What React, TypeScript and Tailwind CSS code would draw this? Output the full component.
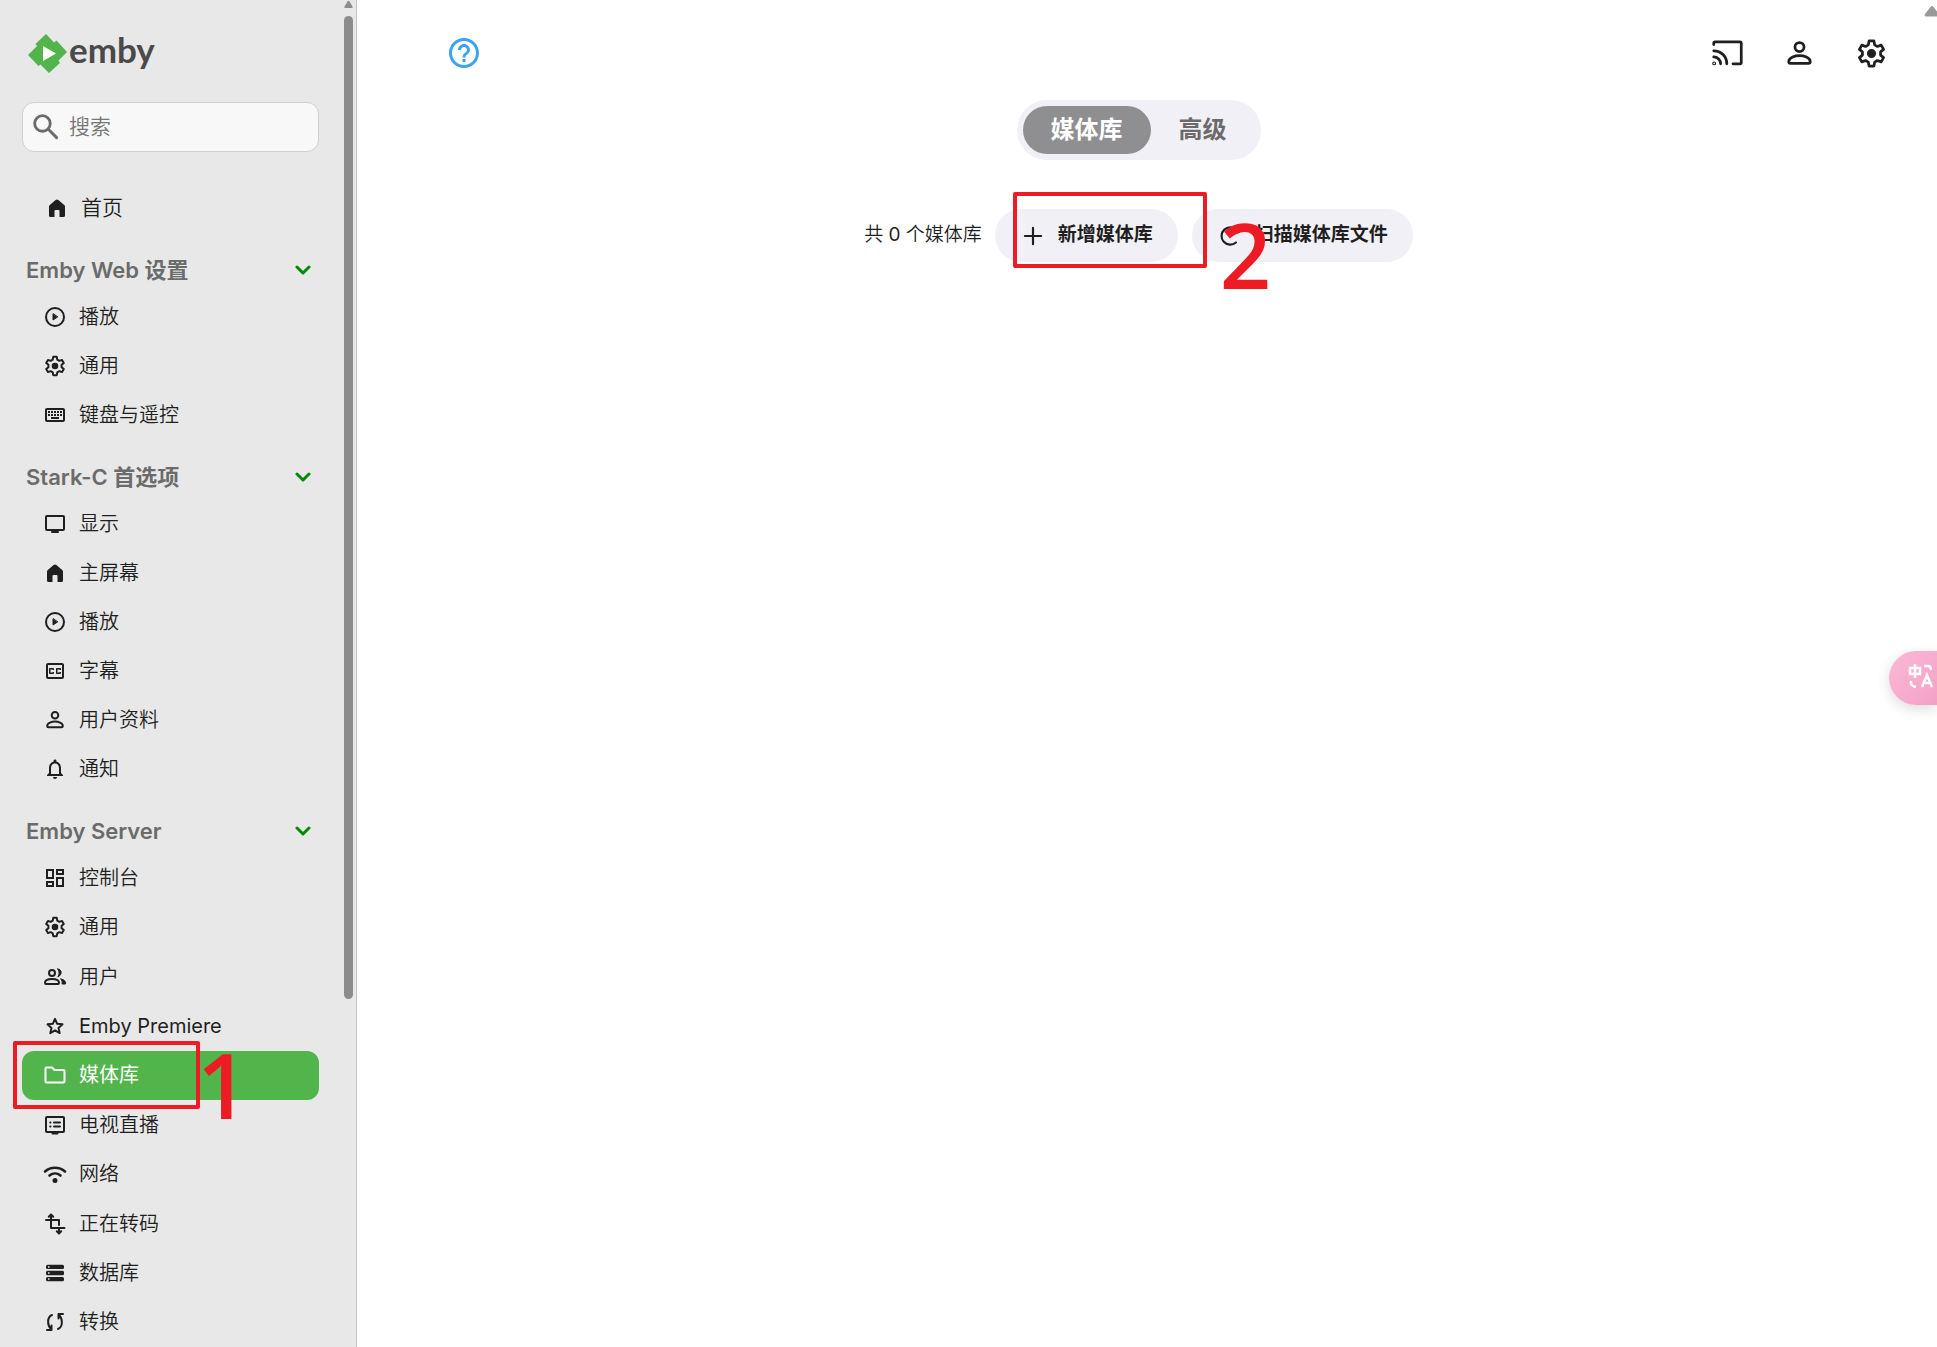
import type { ReactNode } from 'react';
import {
    MdOutlineKeyboard, MdOutlineClosedCaption, MdOutlineNotifications, MdOutlineDashboard, MdOutlineHelpOutline,
} from 'react-icons/md';

interface NavItem {
    label: string;
    icon: ReactNode;
    active?: boolean;
    latin?: boolean;
}

interface NavGroup {
    title: string;
    items: NavItem[];
    fill?: boolean;
}

const groups: NavGroup[] = [
    {
        title: 'Emby Web 设置',
        items: [
            { label: '播放', icon: <PlayIcon /> },
            { label: '通用', icon: <GearIcon size={24} /> },
            { label: '键盘与遥控', icon: <MdOutlineKeyboard size={24} /> },
        ],
    },
    {
        title: 'Stark-C 首选项',
        items: [
            { label: '显示', icon: <ScreenIcon /> },
            { label: '主屏幕', icon: <HomeIcon /> },
            { label: '播放', icon: <PlayIcon /> },
            { label: '字幕', icon: <MdOutlineClosedCaption size={24} /> },
            { label: '用户资料', icon: <PersonIcon size={24} /> },
            { label: '通知', icon: <MdOutlineNotifications size={24} /> },
        ],
    },
    {
        title: 'Emby Server',
        fill: true,
        items: [
            { label: '控制台', icon: <MdOutlineDashboard size={24} /> },
            { label: '通用', icon: <GearIcon size={24} /> },
            { label: '用户', icon: <UsersIcon /> },
            { label: 'Emby Premiere', icon: <StarIcon />, latin: true },
            { label: '媒体库', icon: <FolderIcon />, active: true },
            { label: '电视直播', icon: <LiveTvIcon /> },
            { label: '网络', icon: <WifiIcon /> },
            { label: '正在转码', icon: <TranscodeIcon /> },
            { label: '数据库', icon: <DatabaseIcon /> },
            { label: '转换', icon: <ConvertIcon /> },
        ],
    },
];

// outline of the six-toothed gear, drawn tooth by tooth
const gearPath = [0, 60, 120, 180, 240, 300]
    .flatMap(a => [[6.7, a - 20], [9.3, a - 11], [9.3, a + 11], [6.7, a + 20]])
    .map(([r, a], i) => {
        const rad = (a * Math.PI) / 180;
        return `${i ? 'L' : 'M'}${(12 + r * Math.sin(rad)).toFixed(2)} ${(12 - r * Math.cos(rad)).toFixed(2)}`;
    })
    .join('') + 'Z';

export default function App() {
    return (
        <div className="flex h-screen overflow-hidden bg-white font-['Inter','Noto_Sans_CJK_SC',sans-serif] text-[#1f1f1f]">
            <Sidebar />
            <main className="relative flex-1 pr-[17px]">
                <header className="flex h-[106px] items-center justify-between pl-[89px] pr-8">
                    <button aria-label="帮助" className="text-[#3ea2f5]">
                        <MdOutlineHelpOutline size={36} />
                    </button>
                    <div className="flex items-center gap-[39px]">
                        <button aria-label="投放"><CastIcon /></button>
                        <button aria-label="用户"><PersonIcon size={33} /></button>
                        <button aria-label="设置"><GearIcon size={33} /></button>
                    </div>
                </header>

                <nav className="-mt-1.5 flex justify-center">
                    <div className="flex rounded-full bg-[#f1f0f6] p-1.5 text-2xl font-bold">
                        <a href="#library" className="flex h-12 items-center rounded-full bg-[#8f8f91] px-7 text-white">媒体库</a>
                        <a href="#advanced" className="flex h-12 items-center px-7 text-[#6b6b6b]">高级</a>
                    </div>
                </nav>

                <div className="mt-[49px] flex items-center justify-center text-[19px]">
                    <span className="mr-[13px] font-[350]">共 <span className="font-normal">0</span> 个媒体库</span>
                    <div className="relative mr-3.5">
                        <PillButton icon={<PlusIcon />} label="新增媒体库" />
                        <div className="pointer-events-none absolute -top-[17px] left-[18px] z-10 h-19 w-[194px] rounded-xs border-4 border-[#ed1c24]" />
                    </div>
                    <div className="relative">
                        <PillButton icon={<RefreshIcon />} label="扫描媒体库文件" />
                        <Mark className="left-7 top-0">2</Mark>
                    </div>
                </div>

                <div className="absolute right-0 top-1.5 w-[13px] overflow-hidden">
                    <svg width="16" height="11" viewBox="0 0 16 11" fill="#999999"><path d="M6.5 1q1.5-2 3 0l5.500 7q1 2.500-1 2.500h-12q-2 0-1-2.500z" /></svg>
                </div>
                <button
                    aria-label="翻译"
                    className="absolute right-0 top-[651px] flex h-[54px] w-12 items-start justify-end rounded-l-full bg-linear-to-br from-[#fbbad6] to-[#f4a0c6] pr-[3px] pt-3 shadow-[0_4px_14px_rgba(0,0,0,0.14)]"
                >
                    <TranslateIcon />
                </button>
            </main>
        </div>
    );
}

function Sidebar() {
    return (
        <aside className="relative flex w-[357px] shrink-0 flex-col border-r border-[#c4c4c4] bg-[#e8e8e8] pl-[22px] pr-[37px]">
            <div className="flex h-[102px] shrink-0 items-center gap-0.5 pl-1.5 pt-1">
                <LogoMark />
                <span className="-mt-2 font-['Lato',sans-serif] text-[35px] font-bold text-[#4a4a4a]">emby</span>
            </div>

            <label className="flex h-[50px] shrink-0 items-center rounded-xl border border-[#d0d0d0] bg-[#f8f8f8] pl-1.5">
                <span className="text-[#6b6b6b]"><SearchIcon /></span>
                <input
                    type="text"
                    aria-label="搜索"
                    placeholder="搜索"
                    className="ml-1.5 w-full bg-transparent text-[21px] font-[350] outline-none placeholder:text-[#757575]"
                />
            </label>

            <a href="#home" className="mt-[31px] flex h-[49px] shrink-0 items-center gap-3 pl-[23px] text-[21px] font-[350]">
                <HomeIcon />
                首页
            </a>

            {groups.map(group => (
                <section key={group.title} className={group.fill ? 'flex flex-1 flex-col' : ''}>
                    <button className="mt-4 flex h-11 w-full shrink-0 items-center justify-between pl-1 pr-2 text-[22px] font-semibold text-[#6b6b6b]">
                        {group.title}
                        <svg width="16" height="16" viewBox="0 0 16 16" fill="none" stroke="#008a00" strokeWidth="3" strokeLinecap="round" strokeLinejoin="round">
                            <path d="M2 5l6 6 6-6" />
                        </svg>
                    </button>
                    {group.items.map(item => (
                        <a
                            key={item.label}
                            href="#"
                            className={`flex min-h-[49px] items-center gap-3 rounded-xl pl-[21px] text-xl ${group.fill ? 'flex-1' : ''} ${item.active ? 'bg-[#52b54b] text-white' : ''} ${item.active || item.latin ? 'font-normal' : 'font-[350]'}`}
                        >
                            {item.icon}
                            {item.label}
                        </a>
                    ))}
                </section>
            ))}

            {/* scrollbar */}
            <div className="absolute bottom-0 right-[3px] top-0 w-[9px]">
                <svg width="9" height="8" viewBox="0 0 9 8" fill="#8c8c8c"><path d="M3.500 1.500q1-1.500 2 0l3 5q.500 1.500-.500 1.500h-7q-1 0-.500-1.500z" /></svg>
                <div className="mt-2 h-[73%] rounded-full bg-[#8c8c8c]" />
            </div>

            {/* step 1 highlight */}
            <div className="pointer-events-none absolute left-[13px] top-[1041px] h-[68px] w-[187px] rounded-xs border-4 border-[#ed1c24]" />
            <Mark className="left-[197px] top-[1039px]">1</Mark>
        </aside>
    );
}

function PillButton({ icon, label }: { icon: ReactNode, label: string }) {
    return (
        <button className="flex h-[53px] items-center gap-3 rounded-full bg-[#f1f0f6] px-[25px] font-bold">
            {icon}
            {label}
        </button>
    );
}

function Mark({ className, children }: { className: string, children: ReactNode }) {
    return (
        <span className={`pointer-events-none absolute z-10 font-['Open_Sans',sans-serif] text-[90px] leading-none font-semibold text-[#ed1c24] ${className}`}>
            {children}
        </span>
    );
}

function LogoMark() {
    return (
        <svg width="39" height="39" viewBox="0 0 39 39">
            <path fill="#52b54b" d="M18 0l8 8.500 2.500-2L39 18l-8.500 8.500 1.500 2.500L21 39l-8.500-8.500-2 1.500L0 21l9-9-1.500-2z" />
            <path fill="#fff" d="M15 12v15l13-7.500z" />
        </svg>
    );
}

function Icon({ size = 24, children }: { size?: number, children: ReactNode }) {
    return (
        <svg width={size} height={size} viewBox="0 0 24 24" fill="none" stroke="currentColor" strokeWidth="2" strokeLinecap="round" strokeLinejoin="round">
            {children}
        </svg>
    );
}

function SearchIcon() {
    return (
        <Icon size={34}>
            <circle cx="9.500" cy="9.500" r="5.500" />
            <path d="M14 14l5.500 5.500" />
        </Icon>
    );
}

function PlayIcon() {
    return (
        <Icon>
            <circle cx="12" cy="12" r="9" />
            <path d="M10 9v6l4.500-3z" fill="currentColor" strokeWidth="1" />
        </Icon>
    );
}

function ScreenIcon() {
    return (
        <Icon>
            <rect x="3" y="4" width="18" height="14" rx="1" />
            <path d="M9 20h6" />
        </Icon>
    );
}

function HomeIcon() {
    return (
        <svg width="24" height="24" viewBox="0 0 24 24" fill="currentColor">
            <path d="M4 19.500v-9q0-1 .800-1.600l5.800-4.800q1.400-1.100 2.800 0l5.800 4.800q.800.600.800 1.600v9q0 1.500-1.500 1.500H15q-.500 0-.500-.500V15q0-1-1-1h-3q-1 0-1 1v5.500q0 .500-.500.500H5.500Q4 21 4 19.500z" />
        </svg>
    );
}

function PersonIcon({ size }: { size: number }) {
    return (
        <Icon size={size}>
            <circle cx="12" cy="7.300" r="3.300" />
            <path d="M4.200 18c0-3.200 4.800-4.400 7.800-4.400s7.800 1.200 7.800 4.400q0 1.200-1.200 1.200H5.400q-1.200 0-1.200-1.200z" />
        </Icon>
    );
}

function UsersIcon() {
    return (
        <Icon>
            <circle cx="9" cy="8" r="3" />
            <path d="M2 17.800C2 15 6 14 9 14s7 1 7 3.800q0 1.200-1 1.200H3q-1 0-1-1.200z" />
            <path d="M14.800 4c4 0 5 5.500 0 8 1.800-2.500 1.800-5.500 0-8zM18 14c3.500.800 5 2.500 4.500 5H19c.500-2 0-3.500-1-5z" fill="currentColor" strokeWidth="1" />
        </Icon>
    );
}

function StarIcon() {
    return (
        <Icon>
            <path d="M12 4.800l2.200 5 5.300.500-4 3.600 1.200 5.200-4.700-2.700-4.700 2.700 1.200-5.200-4-3.600 5.300-.500z" />
        </Icon>
    );
}

function FolderIcon() {
    return (
        <Icon>
            <path d="M2.500 18.500v-13q0-1 1-1H9l2.500 2.500h9q1 0 1 1v10.500q0 1-1 1h-17q-1 0-1-1z" />
        </Icon>
    );
}

function LiveTvIcon() {
    return (
        <Icon>
            <rect x="3" y="4" width="18" height="15" rx="1" />
            <path d="M9.500 20.500h5M11 9.500h6M11 13.500h6M7.200 9.500h.300M7.200 13.500h.300" />
        </Icon>
    );
}

function WifiIcon() {
    return (
        <Icon>
            <path d="M2 9.500c5.700-5 14.300-5 20 0M6.500 13.500c3.200-2.600 7.800-2.600 11 0" strokeWidth="2.600" />
            <circle cx="12" cy="18.500" r="1.500" fill="currentColor" />
        </Icon>
    );
}

function TranscodeIcon() {
    return (
        <Icon>
            <path d="M3 8h13v5M8 3v13h13.500M16 16v5M5.800 4.700L8 2.500l2.200 2.200M13.800 19.300l2.200 2.200 2.200-2.200" />
        </Icon>
    );
}

function DatabaseIcon() {
    return (
        <svg width="24" height="24" viewBox="0 0 24 24" fill="currentColor">
            <rect x="3" y="3.700" width="18" height="4.400" rx="1.500" />
            <rect x="3" y="9.800" width="18" height="4.400" rx="1.500" />
            <rect x="3" y="15.900" width="18" height="4.400" rx="1.500" />
            <path d="M5 5.200h1.500v1.500H5zM5 11.200h1.500v1.500H5zM5 17.300h1.500v1.500H5z" fill="#e8e8e8" />
        </svg>
    );
}

function ConvertIcon() {
    return (
        <Icon>
            <path d="M9 5C4 7 4 15 8 19M4 20h4.500v-4.500M15 19c5-2 5-10 1-14M20 4h-4.500v4.500" />
        </Icon>
    );
}

function GearIcon({ size }: { size: number }) {
    return (
        <Icon size={size}>
            <path d={gearPath} />
            <circle cx="12" cy="12" r="2.300" fill="currentColor" />
        </Icon>
    );
}

function CastIcon() {
    return (
        <Icon size={33}>
            <path d="M2 5.500v-1q0-1 1-1h18q1 0 1 1v14q0 1-1 1h-5M2 10c5.300 0 9.500 4.200 9.500 9.500M2 14.500c2.800 0 5 2.200 5 5" />
            <circle cx="2.300" cy="19.200" r=".400" />
        </Icon>
    );
}

function PlusIcon() {
    return <Icon size={26}><path d="M12 4.500v15M4.500 12h15" /></Icon>;
}

function RefreshIcon() {
    return (
        <Icon size={26}>
            <path d="M17.500 18A8 8 0 1 1 18 6.500l2 2M20 4v4.500h-4.500" />
        </Icon>
    );
}

function TranslateIcon() {
    return (
        <svg width="26" height="26" viewBox="0 0 26 26" fill="none" stroke="#fff" strokeWidth="2.500">
            <path d="M2 5h10v6H2zM7 1v14M16 3h4q3 0 3 4M3 18v2q0 3 5 4M14 24l5-12 5 12M16 20h6" />
        </svg>
    );
}
